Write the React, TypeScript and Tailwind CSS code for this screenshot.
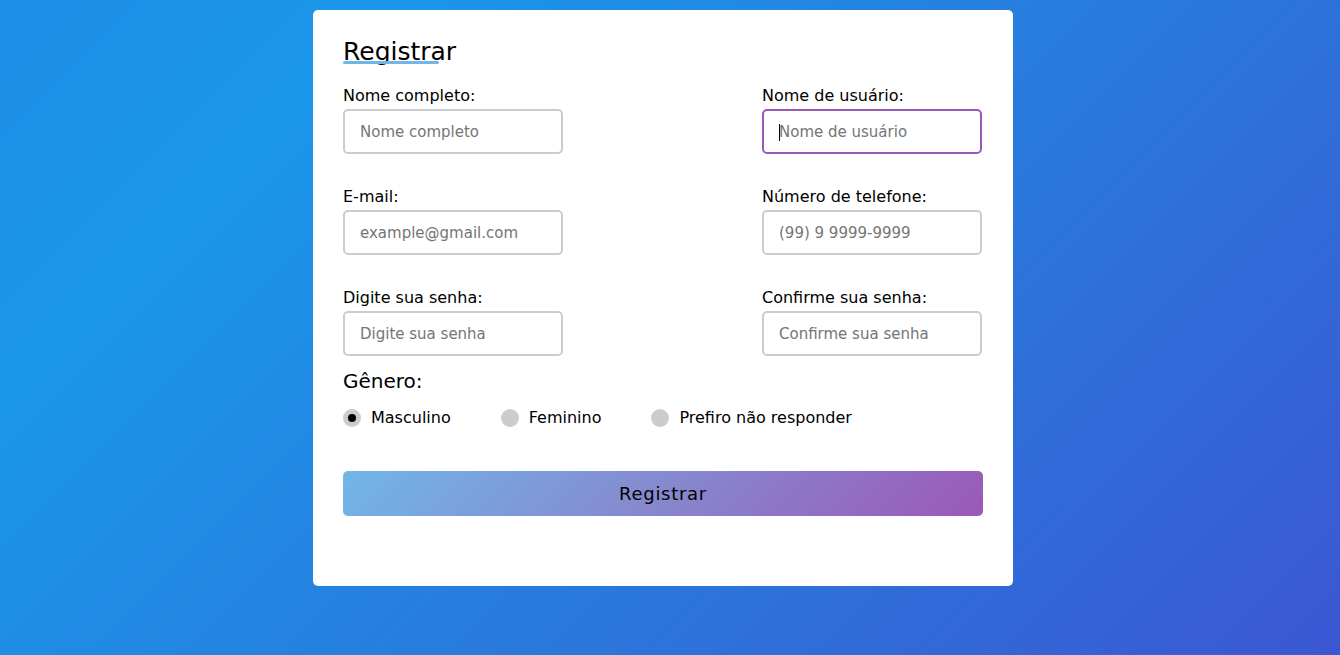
import React, { useState } from "react";

const font = { fontFamily: '"DejaVu Sans", Verdana, sans-serif' };

type Field = { label: string; placeholder: string; type?: string; focused?: boolean };

const fields: Field[] = [
  { label: "Nome completo:", placeholder: "Nome completo" },
  { label: "Nome de usuário:", placeholder: "Nome de usuário", focused: true },
  { label: "E-mail:", placeholder: "example@gmail.com", type: "email" },
  { label: "Número de telefone:", placeholder: "(99) 9 9999-9999" },
  { label: "Digite sua senha:", placeholder: "Digite sua senha", type: "password" },
  { label: "Confirme sua senha:", placeholder: "Confirme sua senha", type: "password" },
];

const genders = ["Masculino", "Feminino", "Prefiro não responder"];

function InputBox({ field }: { field: Field }) {
  return (
    <div className="flex w-[220px] flex-col">
      <label className="mb-[4px] text-[16px] leading-[19px] text-black">{field.label}</label>
      <div
        className={`flex h-[45px] items-center rounded-[5px] border-2 px-[15px] pt-[2px] ${
          field.focused ? "border-[#9b59b6]" : "border-[#cccccc]"
        }`}
      >
        {field.focused && <span className="mr-[-1px] h-[17px] w-px bg-black" />}
        <input
          type={field.type || "text"}
          placeholder={field.placeholder}
          className="w-full bg-transparent text-[15px] text-black outline-none placeholder:text-[#757575]"
          style={font}
        />
      </div>
    </div>
  );
}

export default function App() {
  const [gender, setGender] = useState("Masculino");

  return (
    <div
      className="flex min-h-[655px] w-full justify-center bg-[linear-gradient(135deg,#1f8ee6_0%,#1a97e9_20%,#2a78dc_60%,#3b57d3_100%)] pr-[14px] pt-[10px]"
      style={font}
    >
      <div className="h-[576px] w-[700px] rounded-[5px] bg-white px-[30px] pt-[27px]">
        {/* Title */}
        <div className="relative h-[29px] text-[25px] leading-[29px] text-black">
          Registrar
          <span className="absolute left-0 top-[24px] h-[3px] w-[96px] rounded-sm bg-[#71b7e6]" />
        </div>

        {/* Fields */}
        <div className="mt-[20px] grid grid-cols-2 gap-y-[33px]">
          {fields.map((f, i) => (
            <div key={f.label} className={i % 2 === 1 ? "flex justify-end pr-px" : "flex"}>
              <InputBox field={f} />
            </div>
          ))}
        </div>

        {/* Gender */}
        <div className="mt-[14px] text-[20px] leading-[23px] text-black">Gênero:</div>
        <div className="mt-[15px] flex items-center gap-[50px]">
          {genders.map((g) => (
            <label
              key={g}
              className="flex cursor-pointer items-center gap-[10px] text-[16px] leading-[19px] text-black"
              onClick={() => setGender(g)}
            >
              <span className="flex h-[18px] w-[18px] items-center justify-center rounded-full bg-[#cccccc]">
                {gender === g && <span className="h-[8px] w-[8px] rounded-full bg-black" />}
              </span>
              {g}
            </label>
          ))}
        </div>

        {/* Button */}
        <button
          className="mt-[44px] h-[45px] w-full rounded-[5px] bg-[linear-gradient(135deg,#71b7e6,#9b59b6)] text-[18px] tracking-[0.7px] text-black"
          style={font}
        >
          Registrar
        </button>
      </div>
    </div>
  );
}
